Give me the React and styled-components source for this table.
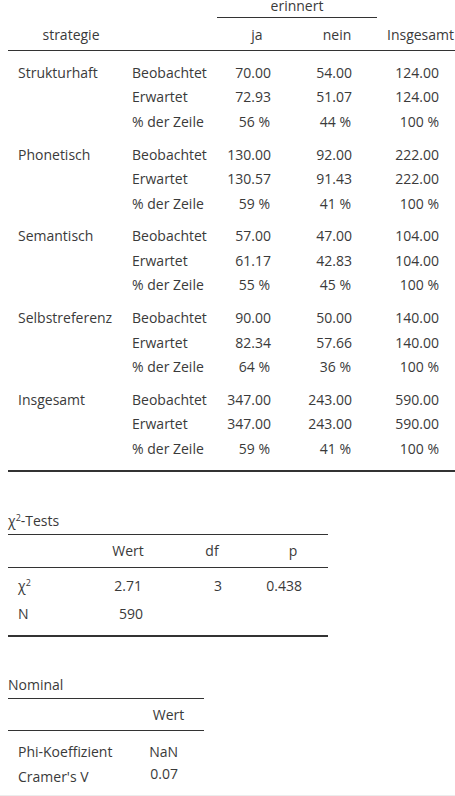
import React from 'react'
import styled, { createGlobalStyle } from 'styled-components'

const Global = createGlobalStyle`
  html, body {
    margin: 0;
    padding: 0;
    background: #fff;
    overflow: hidden;
  }
  body {
    font-family: "Open Sans", "Noto Sans", "Liberation Sans", sans-serif;
    font-size: 14px;
    color: #3a3a3a;
  }
`

const Page = styled.div`
  width: 455px;
  height: 796px;
  overflow: hidden;
  display: flex;
  flex-direction: column;
  border-bottom: 1px solid #ececec;
  box-sizing: border-box;
`

// --- contingency table ---

const MAIN_COLS = '114px 95px 80px 80px 87px'

const Main = styled.div`
  width: 456px;
  margin: -6px 0 0 8px;
  border-bottom: 2px solid #333;
  padding-bottom: 9px;
`

const Row = styled.div`
  display: grid;
  grid-template-columns: ${p => p.$cols};
  height: ${p => p.$h}px;
  align-items: center;
  white-space: nowrap;
`

const HeadRow = styled(Row)`
  border-bottom: 1px solid #333;
`

const Cell = styled.div`
  text-align: ${p => p.$align || 'left'};
  padding: ${p => p.$pad || '0 0 0 10px'};
`

const Spanner = styled.div`
  grid-column: 3 / span 2;
  align-self: stretch;
  display: flex;
  align-items: center;
  justify-content: center;
  border-bottom: 1px solid #333;
`

const Body = styled.div`
  padding-top: 9px;
  display: flex;
  flex-direction: column;
  gap: 8.25px;
`

const Group = styled.div`
  display: flex;
  flex-direction: column;
`

// --- small tables ---

const Small = styled.div`
  width: ${p => p.$w}px;
  margin: ${p => p.$mt}px 0 0 8px;
  border-bottom: ${p => (p.$closed ? '2px solid #333' : 'none')};
  padding-bottom: ${p => (p.$closed ? 7 : 0)}px;
`

const Title = styled.div`
  height: 26px;
  line-height: 26px;
  border-bottom: 1px solid #333;
  white-space: nowrap;
`

const SmallBody = styled.div`
  padding-top: ${p => p.$pt}px;
`

const Sup = styled.sup`
  font-size: 9px;
  vertical-align: 5px;
  line-height: 0;
`

const Chi = () => <>χ<Sup>2</Sup></>

const groups = [
  ['Strukturhaft', ['70.00', '54.00', '124.00'], ['72.93', '51.07', '124.00'], ['56 %', '44 %', '100 %']],
  ['Phonetisch', ['130.00', '92.00', '222.00'], ['130.57', '91.43', '222.00'], ['59 %', '41 %', '100 %']],
  ['Semantisch', ['57.00', '47.00', '104.00'], ['61.17', '42.83', '104.00'], ['55 %', '45 %', '100 %']],
  ['Selbstreferenz', ['90.00', '50.00', '140.00'], ['82.34', '57.66', '140.00'], ['64 %', '36 %', '100 %']],
  ['Insgesamt', ['347.00', '243.00', '590.00'], ['347.00', '243.00', '590.00'], ['59 %', '41 %', '100 %']],
]

const labels = ['Beobachtet', 'Erwartet', '% der Zeile']
const numPad = ['0 26px 0 0', '0 25px 0 0', '0 25px 0 0']
const pctPad = ['0 27px 0 0', '0 26px 0 0', '0 25px 0 0']

const ContingencyTable = () => (
  <Main>
    <Row $cols={MAIN_COLS} $h={24}>
      <Spanner>erinnert</Spanner>
    </Row>
    <HeadRow $cols={MAIN_COLS} $h={32}>
      <Cell $align="center" $pad="0 0 0 12px">strategie</Cell>
      <Cell />
      <Cell $align="center" $pad="0">ja</Cell>
      <Cell $align="center" $pad="0">nein</Cell>
      <Cell $align="center" $pad="0">Insgesamt</Cell>
    </HeadRow>
    <Body>
      {groups.map(([name, ...rows]) => (
        <Group key={name}>
          {rows.map((vals, i) => (
            <Row key={i} $cols={MAIN_COLS} $h={24.5}>
              <Cell>{i === 0 ? name : ''}</Cell>
              <Cell>{labels[i]}</Cell>
              {vals.map((v, j) => (
                <Cell key={j} $align="right" $pad={i === 2 ? pctPad[j] : numPad[j]}>{v}</Cell>
              ))}
            </Row>
          ))}
        </Group>
      ))}
    </Body>
  </Main>
)

const CHI_COLS = '82px 76px 92px 70px'

const ChiTable = () => (
  <Small $w={320} $mt={36} $closed>
    <Title><Chi />-Tests</Title>
    <HeadRow $cols={CHI_COLS} $h={32}>
      <Cell />
      <Cell $align="center" $pad="0">Wert</Cell>
      <Cell $align="center" $pad="0">df</Cell>
      <Cell $align="center" $pad="0">p</Cell>
    </HeadRow>
    <SmallBody $pt={4}>
      <Row $cols={CHI_COLS} $h={28}>
        <Cell><Chi /></Cell>
        <Cell $align="right" $pad="0 24px 0 0">2.71</Cell>
        <Cell $align="right" $pad="0 36px 0 0">3</Cell>
        <Cell $align="right" $pad="0 26px 0 0">0.438</Cell>
      </Row>
      <Row $cols={CHI_COLS} $h={28}>
        <Cell>N</Cell>
        <Cell $align="right" $pad="0 23px 0 0">590</Cell>
        <Cell />
        <Cell />
      </Row>
    </SmallBody>
  </Small>
)

const NOM_COLS = '125px 71px'

const NominalTable = () => (
  <Small $w={196} $mt={35}>
    <Title>Nominal</Title>
    <HeadRow $cols={NOM_COLS} $h={31}>
      <Cell />
      <Cell $align="center" $pad="0">Wert</Cell>
    </HeadRow>
    <SmallBody $pt={8}>
      <Row $cols={NOM_COLS} $h={25}>
        <Cell>Phi-Koeffizient</Cell>
        <Cell $align="right" $pad="0 26px 0 0">NaN</Cell>
      </Row>
      <Row $cols={NOM_COLS} $h={25}>
        <Cell>Cramer's V</Cell>
        <Cell $align="right" $pad="0 26px 6px 0">0.07</Cell>
      </Row>
    </SmallBody>
  </Small>
)

const App = () => (
  <Page>
    <Global />
    <ContingencyTable />
    <ChiTable />
    <NominalTable />
  </Page>
)

export default App
